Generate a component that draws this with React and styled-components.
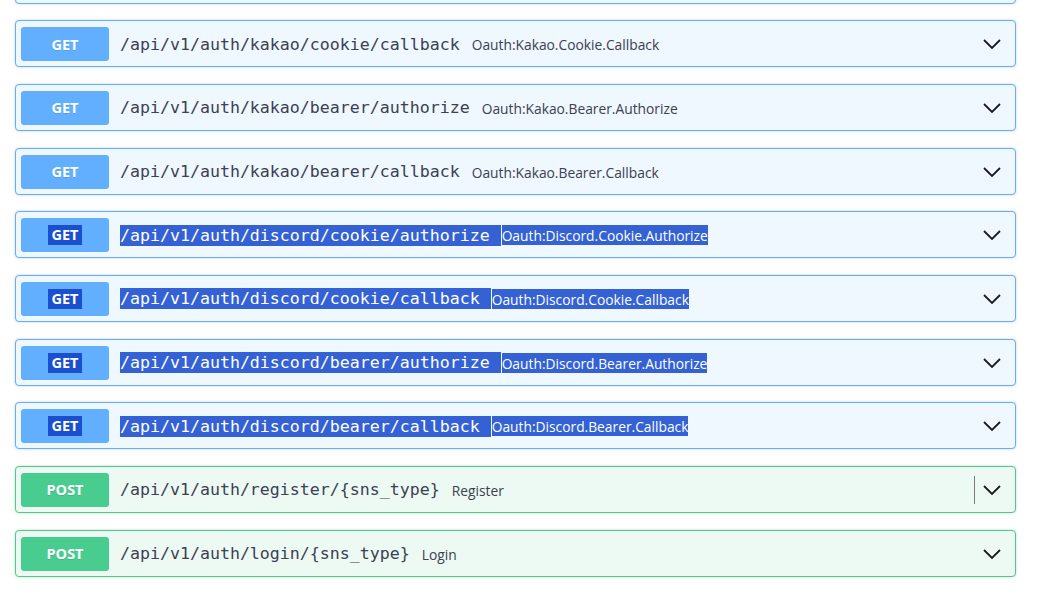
import React from "react";
import styled, { createGlobalStyle } from "styled-components";

const COLORS = {
  GET: { main: "#61affe", bg: "#eff7ff" },
  POST: { main: "#49cc90", bg: "#edfaf4" },
};

const ops = [
  { method: "GET", path: "/api/v1/auth/kakao/cookie/callback", desc: "Oauth:Kakao.Cookie.Callback" },
  { method: "GET", path: "/api/v1/auth/kakao/bearer/authorize", desc: "Oauth:Kakao.Bearer.Authorize" },
  { method: "GET", path: "/api/v1/auth/kakao/bearer/callback", desc: "Oauth:Kakao.Bearer.Callback" },
  { method: "GET", path: "/api/v1/auth/discord/cookie/authorize", desc: "Oauth:Discord.Cookie.Authorize", selected: true },
  { method: "GET", path: "/api/v1/auth/discord/cookie/callback", desc: "Oauth:Discord.Cookie.Callback", selected: true },
  { method: "GET", path: "/api/v1/auth/discord/bearer/authorize", desc: "Oauth:Discord.Bearer.Authorize", selected: true },
  { method: "GET", path: "/api/v1/auth/discord/bearer/callback", desc: "Oauth:Discord.Bearer.Callback", selected: true },
  { method: "POST", path: "/api/v1/auth/register/{sns_type}", desc: "Register", divider: true },
  { method: "POST", path: "/api/v1/auth/login/{sns_type}", desc: "Login" },
];

const App = () => {
  return (
    <>
      <GlobalStyle />
      <Page>
        {/* block scrolled above the top, only its bottom edge shows */}
        <OpBlock $method="GET" $clipped />
        {ops.map((op, i) => (
          <OpBlock key={i} $method={op.method}>
            <Badge $method={op.method}>
              {op.selected ? <BadgeSel>{op.method}</BadgeSel> : op.method}
            </Badge>
            <Path>
              <PathText $selected={op.selected}>{op.path}</PathText>
            </Path>
            <Desc $selected={op.selected}>{op.desc}</Desc>
            <Spacer />
            {op.divider && <Divider />}
            <Chevron width="18" height="10" viewBox="0 0 18 10">
              <polyline points="1,1 9,9 17,1" fill="none" stroke="#1b1b1b" strokeWidth="1.8" />
            </Chevron>
          </OpBlock>
        ))}
      </Page>
    </>
  );
};

export default App;

const GlobalStyle = createGlobalStyle`
  body {
    margin: 0;
    background: #fff;
    overflow: hidden;
  }
`;

const Page = styled.div`
  width: 1045px;
  height: 600px;
  overflow: hidden;
  padding-left: 15px;
  box-sizing: border-box;
  display: flex;
  flex-direction: column;
`;

const OpBlock = styled.div`
  flex-shrink: 0;
  width: 1001px;
  height: 47px;
  box-sizing: border-box;
  margin-top: ${(p) => (p.$clipped ? "-43.33px" : "0")};
  margin-bottom: 16.667px;
  display: flex;
  align-items: center;
  padding: 1px 14px 0 5px;
  border: 1px solid ${(p) => COLORS[p.$method].main};
  background: ${(p) => COLORS[p.$method].bg};
  border-radius: 4px;
  box-shadow: 0 0 3px rgba(0, 0, 0, 0.19);
`;

const Badge = styled.div`
  width: 88px;
  height: 34px;
  flex-shrink: 0;
  display: flex;
  align-items: center;
  justify-content: center;
  border-radius: 3px;
  background: ${(p) => COLORS[p.$method].main};
  color: #fff;
  font-family: "Open Sans", sans-serif;
  font-weight: 700;
  font-size: 14.5px;
  text-shadow: 0 1px 0 rgba(0, 0, 0, 0.1);
`;

const BadgeSel = styled.span`
  background: #1a4fd0;
  line-height: 20px;
  padding: 0 3px;
  text-shadow: none;
`;

const Path = styled.span`
  padding-left: 11px;
  display: flex;
  align-items: center;
`;

const PathText = styled.span`
  font-family: "DejaVu Sans Mono", monospace;
  font-size: 16.6px;
  line-height: 20px;
  padding: 1px 11px 0 0;
  color: ${(p) => (p.$selected ? "#fff" : "#3b4151")};
  background: ${(p) => (p.$selected ? "#3462d4" : "transparent")};
  white-space: nowrap;
`;

const Desc = styled.span`
  margin-left: 1px;
  font-family: "Open Sans", sans-serif;
  font-size: 13.8px;
  line-height: 19px;
  padding-top: 1px;
  color: ${(p) => (p.$selected ? "#fff" : "#3b4151")};
  background: ${(p) => (p.$selected ? "#3462d4" : "transparent")};
  white-space: nowrap;
`;

const Spacer = styled.div`
  flex: 1;
`;

const Divider = styled.div`
  width: 1px;
  height: 28px;
  background: #7a7a7a;
  margin-right: 8px;
`;

const Chevron = styled.svg`
  flex-shrink: 0;
  display: block;
`;
